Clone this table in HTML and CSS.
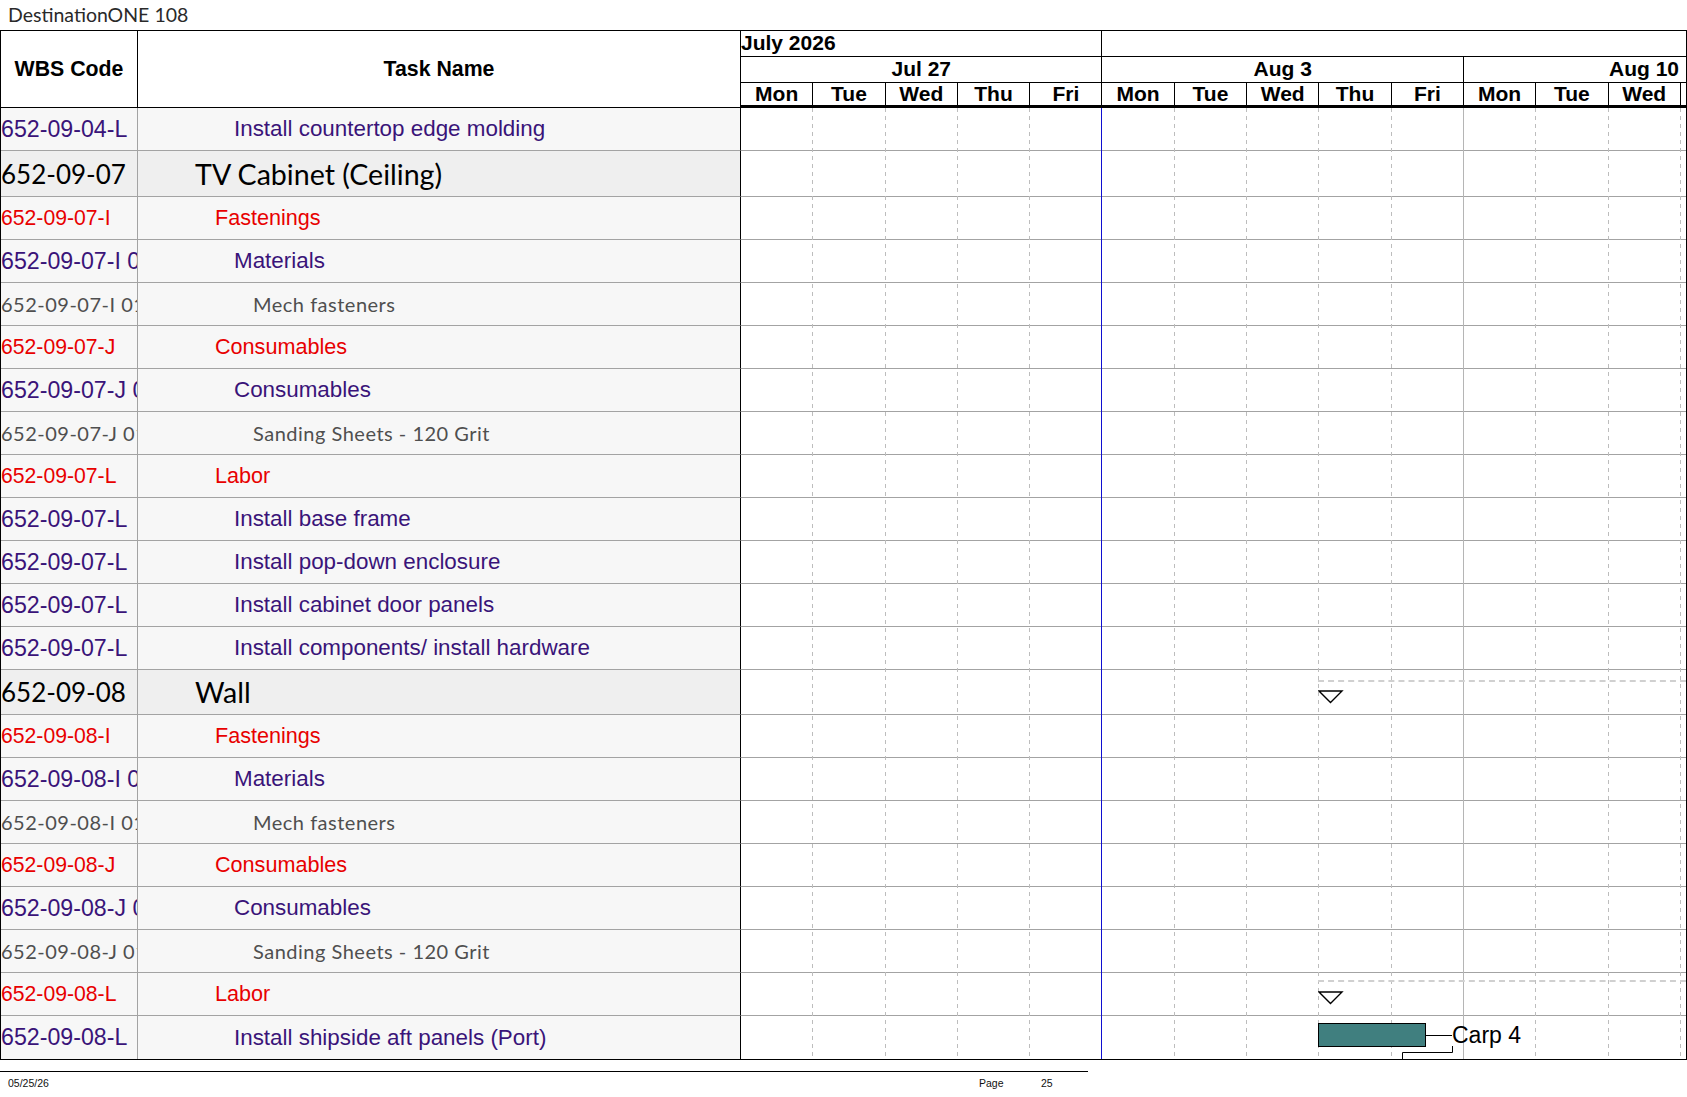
FILE: index.html
```html
<!DOCTYPE html>
<html>
<head>
<meta charset="utf-8">
<title>DestinationONE 108</title>
<link rel="stylesheet" href="styles.css">
</head>
<body>
<div class="title">DestinationONE 108</div>
<div class="chart">
  <div class="head">
    <div class="hcell">WBS Code</div>
    <div class="hcell">Task Name</div>
    <div class="tl">
      <div class="m1">July 2026</div>
      <div class="m2"></div>
      <div class="wk1">Jul 27</div>
      <div class="wk2">Aug 3</div>
      <div class="wk3">Aug 10</div>
      <div class="d">Mon</div><div class="d">Tue</div><div class="d">Wed</div><div class="d">Thu</div><div class="d">Fri</div>
      <div class="d">Mon</div><div class="d">Tue</div><div class="d">Wed</div><div class="d">Thu</div><div class="d">Fri</div>
      <div class="d">Mon</div><div class="d">Tue</div><div class="d">Wed</div><div class="d end"></div>
    </div>
  </div>

  <div class="row l2"><div class="c code">652-09-04-L</div><div class="c name">Install countertop edge molding</div><div class="c gt"></div></div>
  <div class="row grp"><div class="c code">652-09-07</div><div class="c name">TV Cabinet (Ceiling)</div><div class="c gt"></div></div>
  <div class="row l1"><div class="c code">652-09-07-I</div><div class="c name">Fastenings</div><div class="c gt"></div></div>
  <div class="row l2"><div class="c code">652-09-07-I 01</div><div class="c name">Materials</div><div class="c gt"></div></div>
  <div class="row l3"><div class="c code">652-09-07-I 01 01</div><div class="c name">Mech fasteners</div><div class="c gt"></div></div>
  <div class="row l1"><div class="c code">652-09-07-J</div><div class="c name">Consumables</div><div class="c gt"></div></div>
  <div class="row l2"><div class="c code">652-09-07-J 01</div><div class="c name">Consumables</div><div class="c gt"></div></div>
  <div class="row l3"><div class="c code">652-09-07-J 01 01</div><div class="c name">Sanding Sheets - 120 Grit</div><div class="c gt"></div></div>
  <div class="row l1"><div class="c code">652-09-07-L</div><div class="c name">Labor</div><div class="c gt"></div></div>
  <div class="row l2"><div class="c code">652-09-07-L</div><div class="c name">Install base frame</div><div class="c gt"></div></div>
  <div class="row l2"><div class="c code">652-09-07-L</div><div class="c name">Install pop-down enclosure</div><div class="c gt"></div></div>
  <div class="row l2"><div class="c code">652-09-07-L</div><div class="c name">Install cabinet door panels</div><div class="c gt"></div></div>
  <div class="row l2"><div class="c code">652-09-07-L</div><div class="c name">Install components/ install hardware</div><div class="c gt"></div></div>
  <div class="row grp g2"><div class="c code">652-09-08</div><div class="c name">Wall</div>
    <div class="c gt">
      <span class="sumline" style="left:577px"></span>
      <svg class="ms" style="left:577px" width="26" height="14" viewBox="0 0 26 14"><path d="M1 1 H24 L12.5 12.5 Z"/></svg>
    </div>
  </div>
  <div class="row l1"><div class="c code">652-09-08-I</div><div class="c name">Fastenings</div><div class="c gt"></div></div>
  <div class="row l2"><div class="c code">652-09-08-I 01</div><div class="c name">Materials</div><div class="c gt"></div></div>
  <div class="row l3"><div class="c code">652-09-08-I 01 01</div><div class="c name">Mech fasteners</div><div class="c gt"></div></div>
  <div class="row l1"><div class="c code">652-09-08-J</div><div class="c name">Consumables</div><div class="c gt"></div></div>
  <div class="row l2"><div class="c code">652-09-08-J 01</div><div class="c name">Consumables</div><div class="c gt"></div></div>
  <div class="row l3"><div class="c code">652-09-08-J 01 01</div><div class="c name">Sanding Sheets - 120 Grit</div><div class="c gt"></div></div>
  <div class="row l1"><div class="c code">652-09-08-L</div><div class="c name">Labor</div>
    <div class="c gt">
      <span class="sumline sl2" style="left:577px"></span>
      <svg class="ms ms2" style="left:577px" width="26" height="14" viewBox="0 0 26 14"><path d="M1 1 H24 L12.5 12.5 Z"/></svg>
    </div>
  </div>
  <div class="row l2 last"><div class="c code">652-09-08-L</div><div class="c name">Install shipside aft panels (Port)</div>
    <div class="c gt">
      <span class="taskbar" style="left:577px;width:108px"></span>
      <span class="lead" style="left:685px"></span>
      <span class="res" style="left:711px">Carp 4</span>
      <svg class="bracket" style="left:660px" width="54" height="13" viewBox="0 0 54 13"><path d="M1.5 13 V6.5 H51.5 V0"/></svg>
    </div>
  </div>

  <div class="grid">
    <i></i><i></i><i></i><i></i><i class="now"></i>
    <i></i><i></i><i></i><i></i><i class="wk"></i>
    <i></i><i></i><i></i><i class="end"></i>
  </div>
</div>
<div class="foot">
  <span class="date">05/25/26</span>
  <span>Page</span>
  <span>25</span>
</div>
</body>
</html>
```
FILE: styles.css
```css
* { box-sizing: border-box; }

body {
  margin: 0;
  background: #fff;
  font-family: "Liberation Sans", Arial, sans-serif;
  color: #000;
}

.title {
  height: 30px;
  padding-left: 8px;
  font-family: Lato, "DejaVu Sans", sans-serif;
  font-size: 19.5px;
  line-height: 30px;
  color: #2a2a2a;
}

.chart {
  position: relative;
  width: 1687px;
  border: 1px solid #000;
}

.head {
  display: grid;
  grid-template-columns: 137px 603px 1fr;
  height: 77px;
}

.hcell {
  display: flex;
  align-items: center;
  justify-content: center;
  font-weight: bold;
  font-size: 21.3px;
  border-right: 1px solid #000;
  border-bottom: 1px solid #000;
}

.tl {
  display: grid;
  grid-template-columns: repeat(13, 72.3px) 1fr;
  grid-template-rows: 26px 26px 25px;
}

.tl > div {
  border-right: 1px solid #000;
  border-bottom: 1px solid #000;
  font-weight: bold;
  font-size: 21px;
  line-height: 24px;
  text-align: center;
  white-space: nowrap;
  overflow: hidden;
}

.tl .m1 { grid-column: 1 / 6; text-align: left; }
.tl .m2 { grid-column: 6 / 15; border-right: none; }
.tl .wk1 { grid-column: 1 / 6; }
.tl .wk2 { grid-column: 6 / 11; }
.tl .wk3 { grid-column: 11 / 15; border-right: none; text-align: right; padding-right: 7px; }
.tl .d { border-bottom: 3px solid #000; line-height: 22px; }
.tl .d.end { border-right: none; }

.row {
  display: grid;
  grid-template-columns: 137px 603px 1fr;
  height: 43px;
}

.row.grp { height: 46px; }
.row.grp.g2 { height: 45px; }

.c {
  display: flex;
  align-items: center;
  white-space: nowrap;
  overflow: hidden;
  border-bottom: 1px solid #a3a3a3;
}

.row.last .c { border-bottom: none; }

.c.code {
  background: #f7f7f7;
  border-right: 1px solid #a3a3a3;
}

.c.name {
  background: #f7f7f7;
  border-right: 1px solid #000;
}

.c.gt {
  position: relative;
  overflow: visible;
  background: #fff;
}

/* level styles */
.row.grp .c.code,
.row.grp .c.name {
  background: #efefef;
  font-family: Lato, "Open Sans", sans-serif;
  color: #000;
}
.row.grp .c.code { font-size: 26px; }
.row.grp .c.name { font-size: 28.6px; padding-left: 57px; }

.row.l1 .c.code,
.row.l1 .c.name {
  font-size: 21.6px;
  color: #e80000;
}
.row.l1 .c.code { font-size: 21.2px; }
.row.l1 .c.name { padding-left: 77px; }

.row.l2 .c.code,
.row.l2 .c.name {
  font-size: 22.4px;
  color: #3a1479;
}
.row.l2 .c.code { font-size: 23.2px; }
.row.l2 .c.name { padding-left: 96px; }

.row.l3 .c.code,
.row.l3 .c.name {
  font-family: Lato, "Open Sans", sans-serif;
  font-size: 20px;
  letter-spacing: 0.5px;
  color: #4f4f4f;
}
.row.l3 .c.name { padding-left: 115px; }

/* time-scale grid lines over the chart body */
.grid {
  position: absolute;
  left: 740px;
  top: 77px;
  right: 0;
  bottom: 0;
  display: grid;
  grid-template-columns: repeat(13, 72.3px) 1fr;
  pointer-events: none;
  z-index: 1;
}

.grid > i {
  background-image: repeating-linear-gradient(to bottom, #bdbdbd 0 4px, transparent 4px 8px);
  background-size: 1px 100%;
  background-position: right top;
  background-repeat: no-repeat;
}
.grid > i.wk { background-image: linear-gradient(#b5b5b5, #b5b5b5); }
.grid > i.now { background-image: linear-gradient(#1010d0, #1010d0); }
.grid > i.end { background-image: none; }

/* gantt items */
.sumline {
  position: absolute;
  top: 10px;
  right: 0;
  border-top: 2px dashed #d0d0d0;
  z-index: 2;
}
.sumline.sl2 { top: 7px; }

.ms {
  position: absolute;
  top: 20px;
  z-index: 3;
}
.ms.ms2 { top: 18px; }
.ms path {
  fill: #fff;
  stroke: #000;
  stroke-width: 1.4;
}

.taskbar {
  position: absolute;
  top: 7px;
  height: 24px;
  background: #407f7f;
  border: 1px solid #000;
  z-index: 3;
}

.lead {
  position: absolute;
  top: 19px;
  width: 26px;
  border-top: 1px solid #000;
  z-index: 3;
}

.res {
  position: absolute;
  top: 6px;
  font-size: 23px;
  line-height: 26px;
  color: #000;
  z-index: 3;
}

.bracket {
  position: absolute;
  top: 30px;
  z-index: 3;
}
.bracket path {
  fill: none;
  stroke: #000;
  stroke-width: 1;
}

.foot {
  width: 1088px;
  margin-top: 11px;
  border-top: 1px solid #000;
  padding-top: 5px;
  display: grid;
  grid-template-columns: 979px 62px auto;
  font-size: 10.5px;
  line-height: 12px;
  color: #111;
}

.foot .date { padding-left: 8px; }
```
